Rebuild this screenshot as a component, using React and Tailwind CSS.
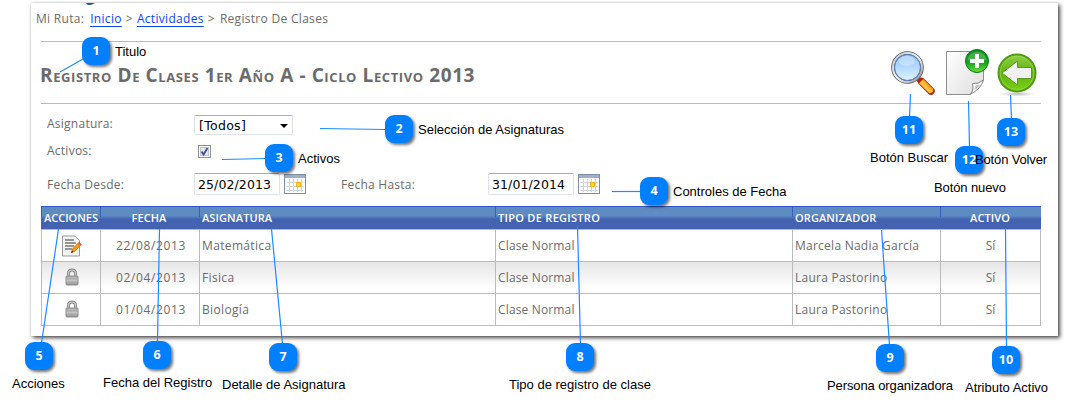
import React from "react";

const rows = [
  { locked: false, date: "22/08/2013", subject: "Matemática", type: "Clase Normal", owner: "Marcela Nadia García", active: "Sí" },
  { locked: true, date: "02/04/2013", subject: "Fisica", type: "Clase Normal", owner: "Laura Pastorino", active: "Sí" },
  { locked: true, date: "01/04/2013", subject: "Biología", type: "Clase Normal", owner: "Laura Pastorino", active: "Sí" },
];

const columns = [
  { label: "ACCIONES", head: "justify-center tracking-normal", cell: "justify-center pl-px" },
  { label: "FECHA", head: "justify-center pr-[2px]", cell: "justify-center pl-[2px] tracking-[0.65px]" },
  { label: "ASIGNATURA", head: "pl-0.5", cell: "pl-0.5 tracking-[0.35px]" },
  { label: "TIPO DE REGISTRO", head: "pl-0.5 tracking-[0.3px]", cell: "pl-0.5 tracking-[0.15px]" },
  { label: "ORGANIZADOR", head: "pl-0.5", cell: "pl-0.5 tracking-[0.25px]" },
  { label: "ACTIVO", head: "justify-center pr-[2px]", cell: "justify-center" },
];

const callouts = [
  { n: 1, badge: "left-[82px] top-[37px]", label: "Titulo", text: "left-[115px] top-[43px]", line: [83, 59, 60, 72] },
  { n: 2, badge: "left-[385px] top-[115px]", label: "Selección de Asignaturas", text: "left-[418px] top-[121px]", line: [386, 129.5, 320, 128.5] },
  { n: 3, badge: "left-[265px] top-[144px]", label: "Activos", text: "left-[298px] top-[150px]", line: [266, 158.5, 222, 159.5] },
  { n: 4, badge: "left-[640px] top-[177px]", label: "Controles de Fecha", text: "left-[673px] top-[183px]", line: [641, 191.5, 612, 191.5] },
  { n: 5, badge: "left-[25px] top-[342px]", label: "Acciones", text: "left-[12px] top-[375px]", line: [41.5, 343, 58.5, 229] },
  { n: 6, badge: "left-[143px] top-[341px]", label: "Fecha del Registro", text: "left-[103px] top-[374px]", line: [157.5, 342, 159.5, 229] },
  { n: 7, badge: "left-[269px] top-[343px]", label: "Detalle de Asignatura", text: "left-[222px] top-[376px]", line: [282.5, 344, 271.5, 229] },
  { n: 8, badge: "left-[566px] top-[343px]", label: "Tipo de registro de clase", text: "left-[509px] top-[376px]", line: [580.5, 344, 577.5, 226] },
  { n: 9, badge: "left-[876px] top-[344px]", label: "Persona organizadora", text: "left-[827px] top-[377px] tracking-[-0.1px]", line: [889.5, 345, 881.5, 230] },
  { n: 10, badge: "left-[992px] top-[346px]", label: "Atributo Activo", text: "left-[965px] top-[379px]", line: [1006.5, 347, 1005.5, 228] },
  { n: 11, badge: "left-[895px] top-[116px]", label: "Botón Buscar", text: "left-[870px] top-[149px]", line: [909.5, 117, 910.5, 94] },
  { n: 12, badge: "left-[955px] top-[146px]", label: "Botón nuevo", text: "left-[934px] top-[179px] tracking-[-0.1px]", line: [969.5, 147, 968.5, 101] },
  { n: 13, badge: "left-[997px] top-[118px]", label: "Botón Volver", text: "left-[975px] top-[151px] tracking-[-0.15px]", line: [1011.5, 119, 1010.5, 95] },
];

function SearchIcon() {
  return (
    <svg width="46" height="48" viewBox="0 0 46 48">
      <defs>
        <linearGradient id="lens" x1="0" y1="0" x2="0" y2="1">
          <stop offset="0" stopColor="#8fc1fb" />
          <stop offset=".55" stopColor="#b9dcff" />
          <stop offset="1" stopColor="#e6f6ff" />
        </linearGradient>
        <linearGradient id="rim" x1="0" y1="0" x2="1" y2="1">
          <stop offset="0" stopColor="#b9bcc4" />
          <stop offset=".5" stopColor="#fafafa" />
          <stop offset="1" stopColor="#8b8b8f" />
        </linearGradient>
        <linearGradient id="handle" x1="0" y1="1" x2="1" y2="0">
          <stop offset="0" stopColor="#e8761a" />
          <stop offset=".45" stopColor="#ffc93c" />
          <stop offset=".7" stopColor="#fb8d15" />
          <stop offset="1" stopColor="#d5400f" />
        </linearGradient>
      </defs>
      <path d="M28 29l4 4" stroke="#6d6d70" strokeWidth="5" />
      <path d="M31.500 31.500L41 41" stroke="#b4210f" strokeWidth="7.500" strokeLinecap="round" />
      <path d="M29 33.300L33.300 29L43.300 39Q44 42.500 39.500 43.500Z" fill="url(#handle)" />
      <circle cx="17.500" cy="17.500" r="14.500" fill="url(#lens)" stroke="#57585e" strokeWidth="3.600" />
      <circle cx="17.500" cy="17.500" r="14.500" fill="none" stroke="url(#rim)" strokeWidth="2" />
      <circle cx="17.500" cy="17.500" r="12.900" fill="none" stroke="#5f86dc" strokeWidth="1" />
      <ellipse cx="17" cy="11" rx="8" ry="5" fill="#fff" opacity=".3" />
    </svg>
  );
}

function NewIcon() {
  return (
    <svg width="45" height="50" viewBox="0 0 45 50">
      <defs>
        <linearGradient id="sheet" x1="0" y1="0" x2="1" y2="1">
          <stop offset="0" stopColor="#fff" />
          <stop offset="1" stopColor="#dedede" />
        </linearGradient>
        <linearGradient id="plus" x1="0" y1="0" x2="0" y2="1">
          <stop offset="0" stopColor="#0c8a18" />
          <stop offset=".6" stopColor="#17a71f" />
          <stop offset="1" stopColor="#72df3c" />
        </linearGradient>
      </defs>
      <path d="M1.500 3.500H38.500V32L25 46.500H1.500Z" fill="url(#sheet)" stroke="#8e8e8e" />
      <path d="M25 46.500Q29 43 27.500 35.500Q33 36.500 38.500 32Q36 41 25 46.500Z" fill="#f8f8f8" stroke="#888" />
      <path d="M28.500 42Q31 40 30.500 37.500Q34 37.500 36 36Q33 40 28.500 42Z" fill="#b9b9b9" />
      <circle cx="32" cy="13" r="11.500" fill="url(#plus)" stroke="#0b7d17" />
      <path d="M22.500 12Q24 4 32 3.500Q40 4 41.500 12Q32 15 22.500 12Z" fill="#fff" opacity=".22" />
      <path d="M30 6h4v5h5v4h-5v5h-4v-5h-5v-4h5z" fill="#fff" />
    </svg>
  );
}

function BackIcon() {
  return (
    <svg width="42" height="46" viewBox="0 0 42 46">
      <defs>
        <linearGradient id="back" x1="0" y1="0" x2="0" y2="1">
          <stop offset="0" stopColor="#93cf43" />
          <stop offset=".5" stopColor="#5fb30f" />
          <stop offset="1" stopColor="#7cd014" />
        </linearGradient>
        <radialGradient id="ground">
          <stop offset="0" stopColor="#777" stopOpacity=".5" />
          <stop offset="1" stopColor="#777" stopOpacity="0" />
        </radialGradient>
      </defs>
      <ellipse cx="21" cy="42" rx="18" ry="2.500" fill="url(#ground)" />
      <circle cx="21" cy="21" r="18.500" fill="url(#back)" stroke="#4d9c13" strokeWidth="2" />
      <circle cx="21" cy="21" r="16.800" fill="none" stroke="#a3d95c" strokeWidth="1" opacity=".7" />
      <path d="M6 21L21.500 9V15.500H35.500V26.500H21.500V33Z" fill="#f1f1f1" stroke="#5a9b22" strokeWidth="1" />
    </svg>
  );
}

function EditIcon() {
  return (
    <svg width="21" height="22" viewBox="0 0 21 22">
      <path d="M1.500 1H14L18.500 5.500V21H1.500Z" fill="#f4f4f2" stroke="#999" />
      <path d="M4 5h9M4 8h11M4 11h9M4 14h7" stroke="#777" strokeWidth="1.300" />
      <path d="M10.500 17.500L11.800 13.600L18 7.300L20.300 9.500L14.200 16Z" fill="#f99c12" stroke="#d76d0a" strokeWidth=".8" />
      <path d="M17 8.300L18.200 7L20.500 9.300L19.400 10.500Z" fill="#dd5838" />
      <path d="M10.200 18l.8-2.400 1.500 1.500z" fill="#222" />
    </svg>
  );
}

function LockIcon() {
  return (
    <svg className="-mt-px" width="14" height="18" viewBox="0 0 14 18">
      <defs>
        <linearGradient id="lock" x1="0" y1="0" x2="0" y2="1">
          <stop offset="0" stopColor="#adadad" />
          <stop offset=".5" stopColor="#c6c6c6" />
          <stop offset="1" stopColor="#919191" />
        </linearGradient>
      </defs>
      <path d="M3.500 9V5.500Q3.500 2 7 2Q10.500 2 10.500 5.500V9" fill="none" stroke="#8d8d8d" strokeWidth="3" />
      <path d="M3.500 9V5.500Q3.500 2 7 2Q10.500 2 10.500 5.500V9" fill="none" stroke="#c4c4c4" strokeWidth="1.200" />
      <rect x="1" y="8" width="12" height="9" rx="1" fill="url(#lock)" stroke="#909090" />
      <path d="M2 11h10M2 14h10" stroke="#a2a2a2" strokeWidth=".8" />
    </svg>
  );
}

function CalendarIcon() {
  return (
    <svg width="22" height="20" viewBox="0 0 22 20">
      <rect x=".5" y=".5" width="21" height="19" fill="#fff" stroke="#7f8fa6" />
      <rect x="1" y="1" width="20" height="3" fill="#9db0c8" />
      <path d="M2.500 8.500h17M2.500 12.500h17M2.500 16.500h17M5.500 5v13M9.500 5v13M13.500 5v13M17.500 5v13" stroke="#cfd2d8" />
      <rect x="12.500" y="8.500" width="4" height="4" fill="#ffe01a" stroke="#f9b122" />
    </svg>
  );
}

function DateField({ value }) {
  return (
    <div className="flex items-center gap-1">
      <div className="flex h-[22px] w-[86px] items-center rounded-xs border border-[#dfe2ea] border-t-[#abadb3] bg-white pt-[2px] pl-[3px] font-['DejaVu_Sans',sans-serif] text-[12.5px] tracking-[0.1px] text-black">
        {value}
      </div>
      <CalendarIcon />
    </div>
  );
}

export default function App() {
  return (
    <div className="relative h-[411px] w-[1066px] overflow-hidden bg-white font-['Open_Sans',sans-serif] text-[12px] text-[#6b6b6b]">
      <div className="pt-[3px] pl-[31px]">
        <main className="flex h-[333px] w-[1027px] flex-col bg-white pr-[17px] pl-[10px] shadow-[2px_2px_4px_0px_rgba(0,0,0,0.7),0_0_2px_rgba(0,0,0,0.2)]">
          <nav className="-ml-[5px] flex h-[38px] items-start gap-[5px] pt-[7px] leading-[18px] tracking-[0.3px] whitespace-nowrap">
            <span className="mr-px">Mi Ruta:</span>
            <a className="text-[#0a46f5] underline underline-offset-3">Inicio</a>
            <span className="-mx-px">&gt;</span>
            <a className="text-[#0a46f5] underline underline-offset-3">Actividades</a>
            <span className="-ml-px">&gt;</span>
            <span>Registro De Clases</span>
          </nav>
          <header className="flex h-[63px] items-start justify-between border-y border-[#bbb]">
            <h1 className="mt-[21px] -ml-px text-[19px] leading-6 font-bold tracking-[0.6px] whitespace-nowrap [font-variant:small-caps]">
              Registro De Clases 1er Año A - Ciclo Lectivo 2013
            </h1>
            <div className="flex items-start pr-[3px]">
              <div className="mt-[8px] mr-[9px]"><SearchIcon /></div>
              <div className="mt-[6px] mr-[6px]"><NewIcon /></div>
              <div className="mt-[10px]"><BackIcon /></div>
            </div>
          </header>
          <section className="flex h-[102px] flex-col pl-[6px] tracking-[0.25px]">
            <div className="flex h-[33px] items-start pt-[11px]">
              <span className="w-[147px] leading-[18px]">Asignatura:</span>
              <div className="flex h-5 w-[99px] items-center justify-between rounded-xs border border-[#dfe2ea] border-t-[#abadb3] bg-white pt-[2px] pr-1 pl-1 font-['DejaVu_Sans',sans-serif] text-[12.5px] tracking-[0.3px] text-black">
                [Todos]
                <svg width="8" height="4" viewBox="0 0 8 4"><path d="M0 0h8L4 4z" fill="#000" /></svg>
              </div>
            </div>
            <div className="flex h-[31px] items-start pt-[5px]">
              <span className="w-[151px] leading-[18px]">Activos:</span>
              <svg className="mt-[3px]" width="13" height="13" viewBox="0 0 13 13">
                <rect x=".5" y=".5" width="12" height="12" fill="#fff" stroke="#8e8f8f" />
                <rect x="2.500" y="2.500" width="8" height="8" fill="#e3e6ea" stroke="#c3c7cc" />
                <path d="M3.500 6.500L5.500 9.500L9.500 3" fill="none" stroke="#3d5096" strokeWidth="1.800" />
              </svg>
            </div>
            <div className="flex items-start pt-[5px]">
              <span className="w-[147px] pt-[3px] leading-[18px]">Fecha Desde:</span>
              <DateField value="25/02/2013" />
              <span className="ml-[35px] w-[147px] pt-[3px] leading-[18px]">Fecha Hasta:</span>
              <DateField value="31/01/2014" />
            </div>
          </section>
          <section className="w-[1000px]">
            <div className="grid h-[23px] grid-cols-[59px_99px_296px_297px_148px_101px] border-t border-[#2f58c4] bg-linear-to-b from-[#5f8bc3] from-40% to-[#4363b1] to-55%">
              {columns.map((c) => (
                <div key={c.label} className="flex items-center bg-linear-to-b from-[#3560b8] from-45% to-transparent to-45% bg-[length:1px_100%] bg-no-repeat pl-px text-[11px] font-semibold tracking-[0.1px] whitespace-nowrap text-white">
                  <span className={"flex w-full " + c.head}>{c.label}</span>
                </div>
              ))}
            </div>
            <div className="border-t border-r border-[#bbb]">
              {rows.map((r, i) => (
                <div key={r.date} className={"grid h-8 grid-cols-[59px_99px_296px_297px_148px_100px] border-b border-[#bbb] " + (i === 1 ? "bg-linear-to-b from-[#e6e6e6] to-[#fdfdfd] to-80%" : "bg-white")}>
                  {[r.locked ? <LockIcon key="l" /> : <EditIcon key="e" />, r.date, r.subject, r.type, r.owner, r.active].map((v, j) => (
                    <div key={j} className={"flex items-center border-l border-[#bbb] whitespace-nowrap " + columns[j].cell}>{v}</div>
                  ))}
                </div>
              ))}
            </div>
          </section>
        </main>
      </div>

      <svg className="pointer-events-none absolute inset-0" width="1066" height="411">
        <path d="M86 3h9q-3 2-6 2-2 0-3-2z" fill="#1b4f8f" />
        {callouts.map((c) => (
          <line key={c.n} x1={c.line[0]} y1={c.line[1]} x2={c.line[2]} y2={c.line[3]} stroke="#1a8cff" strokeWidth="1.200" />
        ))}
      </svg>
      {callouts.map((c) => (
        <React.Fragment key={c.n}>
          <div className={"absolute flex size-7 items-center justify-center rounded-[9px] bg-[#0080ff] font-['Open_Sans',sans-serif] text-[12.5px] font-bold text-white shadow-[2px_2px_3px_rgba(0,0,0,0.55)] " + c.badge}>{c.n}</div>
          <div className={"absolute font-['Liberation_Sans',Arial,sans-serif] text-[13px] leading-[17px] whitespace-nowrap text-black " + c.text}>{c.label}</div>
        </React.Fragment>
      ))}
    </div>
  );
}
